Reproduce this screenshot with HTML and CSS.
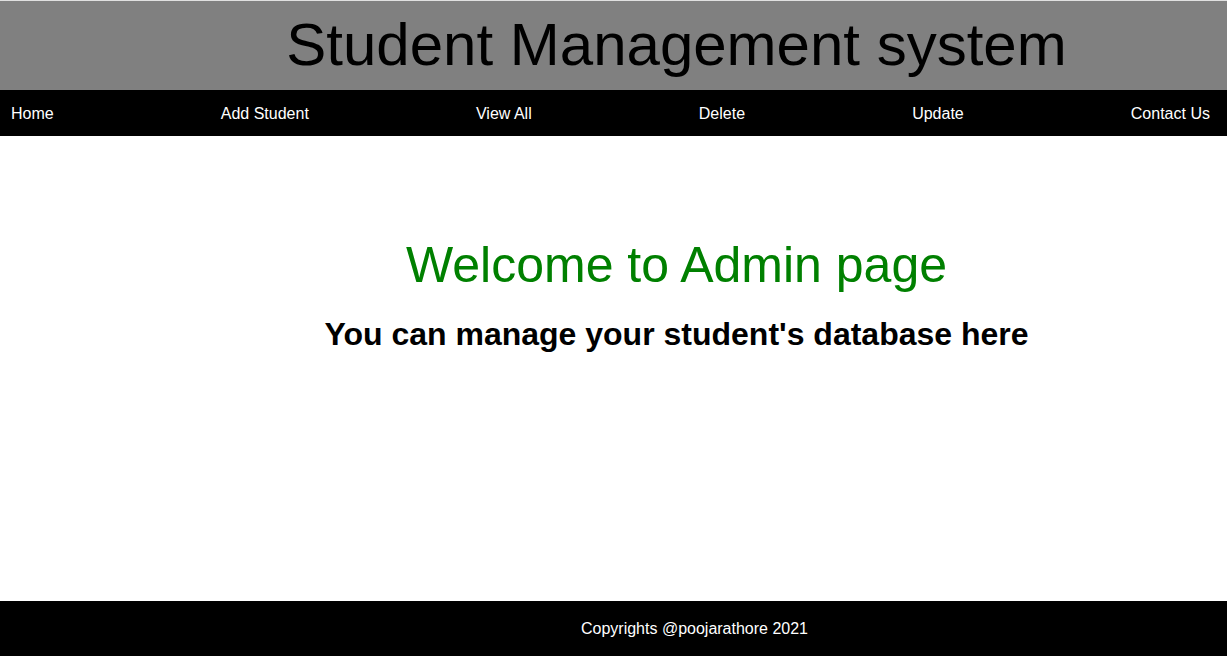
FILE: index.html
```html
<!DOCTYPE html>
<html>
<head>
<meta charset="utf-8">
<title>Student Management system</title>
<link rel="stylesheet" href="styles.css">
</head>
<body>
<header class="top">
  <div class="title">Student Management system</div>
</header>
<nav class="nav">
  <a href="#">Home</a>
  <a href="#">Add Student</a>
  <a href="#">View All</a>
  <a href="#">Delete</a>
  <a href="#">Update</a>
  <a href="#">Contact Us</a>
</nav>
<main class="main">
  <div class="welcome">Welcome to Admin page</div>
  <h1 class="sub">You can manage your student's database here</h1>
</main>
<footer class="foot">Copyrights @poojarathore 2021</footer>
</body>
</html>
```

FILE: styles.css
```css
html, body {
  margin: 0;
  padding: 0;
  height: 100%;
}
body {
  font-family: "Liberation Sans", Arial, sans-serif;
  display: flex;
  flex-direction: column;
  background: #fff;
}
.top {
  background: #808080;
  border-top: 1px solid #e0e0e0;
  height: 89px;
  display: flex;
  align-items: center;
  justify-content: center;
  padding-left: 126px;
}
.title {
  font-size: 60px;
  color: #000;
  line-height: 1;
  margin-top: -2px;
}
.nav {
  background: #000;
  height: 46px;
  display: flex;
  align-items: center;
  justify-content: space-between;
  padding: 2px 17px 0 11px;
  box-sizing: border-box;
}
.nav a {
  color: #fff;
  text-decoration: none;
  font-size: 16px;
}
.main {
  flex: 1;
  display: flex;
  flex-direction: column;
  align-items: center;
  padding-left: 126px;
  padding-top: 100px;
}
.welcome {
  color: #008000;
  font-size: 50px;
  line-height: 58px;
}
.sub {
  margin: 22px 0 0;
  font-size: 32px;
  line-height: 37px;
  font-weight: bold;
}
.foot {
  background: #000;
  color: #fff;
  height: 55px;
  display: flex;
  align-items: center;
  justify-content: center;
  padding-left: 162px;
  font-size: 16px;
}
```
